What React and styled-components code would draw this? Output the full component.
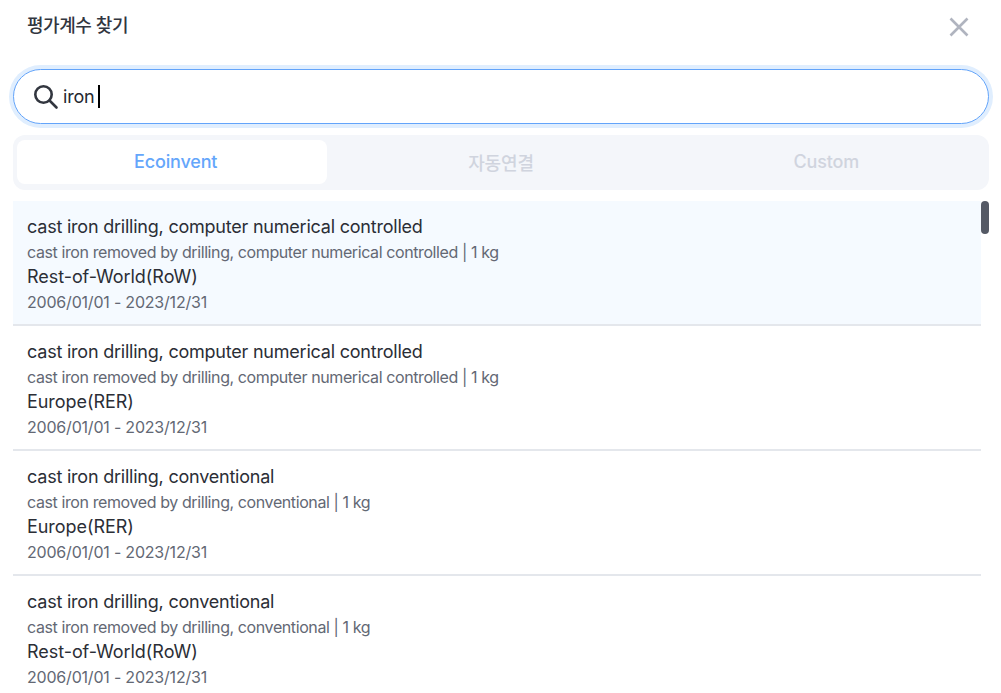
import { useState } from "react";
import styled, { createGlobalStyle } from "styled-components";

const GlobalStyle = createGlobalStyle`
  html, body {
    margin: 0;
    padding: 0;
    height: 100%;
    overflow: hidden;
    background: #fff;
    font-family: Inter, "Noto Sans CJK KR", sans-serif;
  }
`;

const Modal = styled.div`
  width: 1001px;
  height: 693px;
  box-sizing: border-box;
  padding: 0 12px 0 13px;
  display: flex;
  flex-direction: column;
  overflow: hidden;
`;

const Header = styled.header`
  height: 69px;
  flex: none;
  display: flex;
  align-items: flex-start;
  justify-content: space-between;
  padding: 14px 19px 0 14px;
  box-sizing: border-box;
`;

const Title = styled.h1`
  margin: 0;
  font-size: 18px;
  line-height: 24px;
  font-weight: 500;
  color: #32363f;
  letter-spacing: -0.45px;
`;

const CloseButton = styled.button`
  border: 0;
  padding: 0;
  margin: 2px 0 0;
  background: none;
  width: 22px;
  height: 22px;
  color: #b0b4bf;
  display: flex;
`;

const SearchBox = styled.div`
  height: 55px;
  flex: none;
  box-sizing: border-box;
  display: flex;
  align-items: center;
  gap: 4px;
  padding: 0 18px 0 19px;
  background: #fff;
  border: 1px solid #63a4fa;
  border-radius: 28px;
  box-shadow: 0 0 0 4px #e0eefe;
`;

const SearchText = styled.span`
  font-size: 18px;
  line-height: 24px;
  color: #25282f;
  letter-spacing: -0.2px;
`;

const Caret = styled.span`
  display: inline-block;
  width: 2px;
  height: 23px;
  margin-left: 4px;
  background: #000;
  vertical-align: -5px;
`;

const TabBar = styled.div`
  position: relative;
  height: 55px;
  flex: none;
  margin-top: 11px;
  padding-bottom: 2px;
  box-sizing: border-box;
  display: grid;
  grid-template-columns: repeat(3, 1fr);
  background: #f4f6fa;
  border-radius: 12px;
`;

const TabIndicator = styled.div`
  position: absolute;
  left: 4px;
  top: 5px;
  bottom: 6px;
  width: 310px;
  border-radius: 8px;
  background: #fff;
`;

const Tab = styled.div`
  position: relative;
  display: flex;
  align-items: center;
  justify-content: center;
  font-size: 18px;
  font-weight: 500;
  letter-spacing: -0.15px;
  color: ${(p) => (p.$active ? "#64a6fb" : "#d0d4de")};
`;

const ListWrap = styled.div`
  margin-top: 11px;
  display: flex;
  flex: 1;
  min-height: 0;
`;

const List = styled.ul`
  list-style: none;
  margin: 0;
  padding: 0;
  flex: 1;
  min-width: 0;
`;

const Row = styled.li`
  height: 125px;
  box-sizing: border-box;
  padding: 13px 14px 0;
  border-bottom: 2px solid #e4e7ec;
  background: ${(p) => (p.$selected ? "#f5faff" : "#fff")};
`;

const Name = styled.div`
  font-size: 18px;
  line-height: 25px;
  color: #2b2e36;
  letter-spacing: -0.22px;
`;

const Region = styled(Name)`
  letter-spacing: -0.05px;
`;

const Detail = styled.div`
  font-size: 16px;
  line-height: 25px;
  margin: 1px 0 -1px;
  color: #636874;
  letter-spacing: -0.4px;
`;

const Period = styled(Detail)`
  letter-spacing: -0.2px;
`;

const ScrollTrack = styled.div`
  width: 8px;
  flex: none;
`;

const ScrollThumb = styled.div`
  height: 33px;
  border-radius: 4px;
  background: #545965;
`;

const items = [
  {
    name: "cast iron drilling, computer numerical controlled",
    detail: "cast iron removed by drilling, computer numerical controlled | 1 kg",
    region: "Rest-of-World(RoW)",
  },
  {
    name: "cast iron drilling, computer numerical controlled",
    detail: "cast iron removed by drilling, computer numerical controlled | 1 kg",
    region: "Europe(RER)",
  },
  {
    name: "cast iron drilling, conventional",
    detail: "cast iron removed by drilling, conventional | 1 kg",
    region: "Europe(RER)",
  },
  {
    name: "cast iron drilling, conventional",
    detail: "cast iron removed by drilling, conventional | 1 kg",
    region: "Rest-of-World(RoW)",
  },
];

function App() {
  const [tab] = useState("Ecoinvent");

  return (
    <Modal>
      <GlobalStyle />
      <Header>
        <Title>평가계수 찾기</Title>
        <CloseButton aria-label="닫기">
          <svg width="22" height="22" viewBox="0 0 22 22" fill="none">
            <path d="M2.5 2.5 19.5 19.5M19.5 2.5 2.5 19.5" stroke="currentColor" strokeWidth="2.6" />
          </svg>
        </CloseButton>
      </Header>
      <SearchBox>
        <svg width="26" height="26" viewBox="0 0 26 26" fill="none" stroke="#32363f" strokeWidth="2.6">
          <circle cx="10.5" cy="10.5" r="8.2" />
          <path d="M16.5 16.5 23.5 23.5" strokeLinecap="round" />
        </svg>
        <SearchText>
          iron
          <Caret />
        </SearchText>
      </SearchBox>
      <TabBar>
        <TabIndicator />
        {["Ecoinvent", "자동연결", "Custom"].map((label) => (
          <Tab key={label} $active={label === tab}>
            {label}
          </Tab>
        ))}
      </TabBar>
      <ListWrap>
        <List>
          {items.map((item, i) => (
            <Row key={i} $selected={i === 0}>
              <Name>{item.name}</Name>
              <Detail>{item.detail}</Detail>
              <Region>{item.region}</Region>
              <Period>2006/01/01 - 2023/12/31</Period>
            </Row>
          ))}
        </List>
        <ScrollTrack>
          <ScrollThumb />
        </ScrollTrack>
      </ListWrap>
    </Modal>
  );
}

export default App;
